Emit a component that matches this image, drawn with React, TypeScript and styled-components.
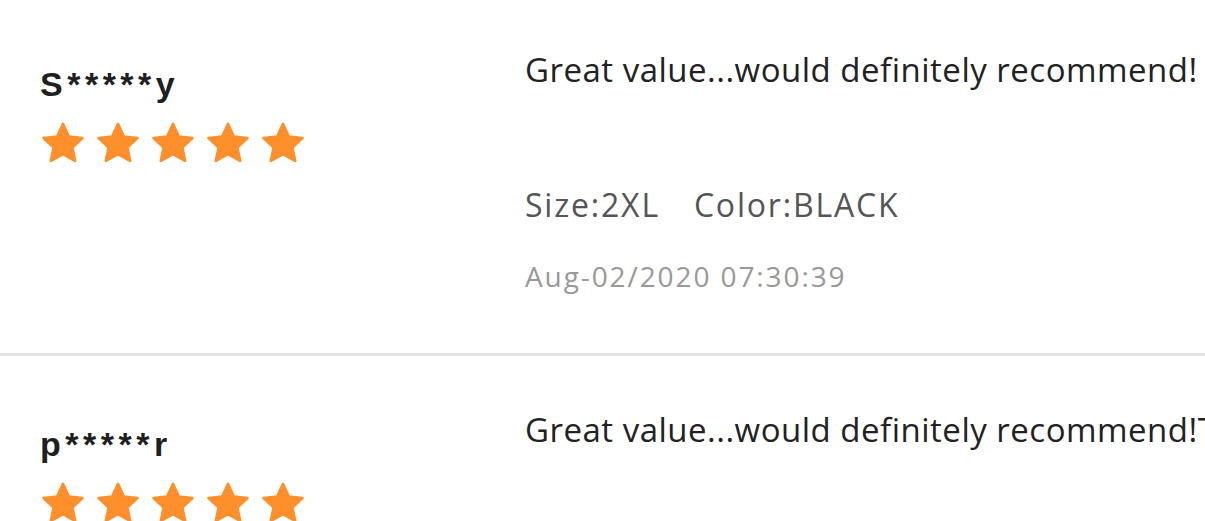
import styled, { createGlobalStyle } from "styled-components";

interface Review {
  user: string;
  rating: number;
  comment: string;
  size?: string;
  color?: string;
  date?: string;
}

const reviews: Review[] = [
  {
    user: "S*****y",
    rating: 5,
    comment: "Great value...would definitely recommend!",
    size: "2XL",
    color: "BLACK",
    date: "Aug-02/2020 07:30:39",
  },
  {
    user: "p*****r",
    rating: 5,
    comment: "Great value...would definitely recommend!Thanks",
    size: "XL",
    color: "BLACK",
    date: "Aug-01/2020 11:12:05",
  },
];

const GlobalStyle = createGlobalStyle`
  html, body {
    margin: 0;
    padding: 0;
    background: #fff;
    overflow: hidden;
  }
  body {
    font-family: "Open Sans", "Noto Sans", sans-serif;
  }
`;

const Star = () => (
  <svg width="42" height="41" viewBox="1.3 1.4 21.4 20.4">
    <path
      d="M12 2.2l2.95 6.35 6.95.8-5.15 4.75 1.4 6.85L12 17.5l-6.15 3.45 1.4-6.85L2.1 9.35l6.95-.8z"
      fill="#fe8f2a"
      stroke="#fe8f2a"
      strokeWidth="1.4"
      strokeLinejoin="round"
    />
  </svg>
);

const ReviewItem = ({ review }: { review: Review }) => (
  <Row>
    <Author>
      <Name>{review.user}</Name>
      <Stars>
        {Array.from({ length: review.rating }).map((_, i) => (
          <Star key={i} />
        ))}
      </Stars>
    </Author>
    <Body>
      <Comment>{review.comment}</Comment>
      <Specs>
        <span>Size:{review.size}</span>
        <span>Color:{review.color}</span>
      </Specs>
      <Date>{review.date}</Date>
    </Body>
  </Row>
);

export default function App() {
  return (
    <>
      <GlobalStyle />
      <List>
        {reviews.map((r, i) => (
          <ReviewItem key={i} review={r} />
        ))}
      </List>
    </>
  );
}

const List = styled.div`
  width: 1205px;
  overflow: hidden;
  margin-top: -4px;
`;

const Row = styled.div`
  display: flex;
  padding: 52px 0 59px;
  border-bottom: 3px solid #e2e2e2;
`;

const Author = styled.div`
  width: 525px;
  flex-shrink: 0;
  padding-left: 40px;
  box-sizing: border-box;
  padding-top: 18px;
`;

const Name = styled.div`
  font-family: "Liberation Sans", Arial, sans-serif;
  font-weight: 700;
  font-size: 34px;
  line-height: 36px;
  letter-spacing: 4.5px;
  color: #1f1f1f;
`;

const Stars = styled.div`
  display: flex;
  gap: 13px;
  margin-top: 20px;
  margin-left: 2px;
`;

const Body = styled.div`
  display: flex;
  flex-direction: column;
  white-space: nowrap;
`;

const Comment = styled.div`
  font-size: 33px;
  line-height: 44px;
  letter-spacing: 0.5px;
  color: #222;
`;

const Specs = styled.div`
  display: flex;
  gap: 34px;
  margin-top: 92px;
  font-size: 32px;
  line-height: 42px;
  letter-spacing: 1.8px;
  color: #555;
`;

const Date = styled.div`
  margin-top: 32px;
  font-size: 28px;
  line-height: 36px;
  letter-spacing: 1.9px;
  color: #999;
`;
